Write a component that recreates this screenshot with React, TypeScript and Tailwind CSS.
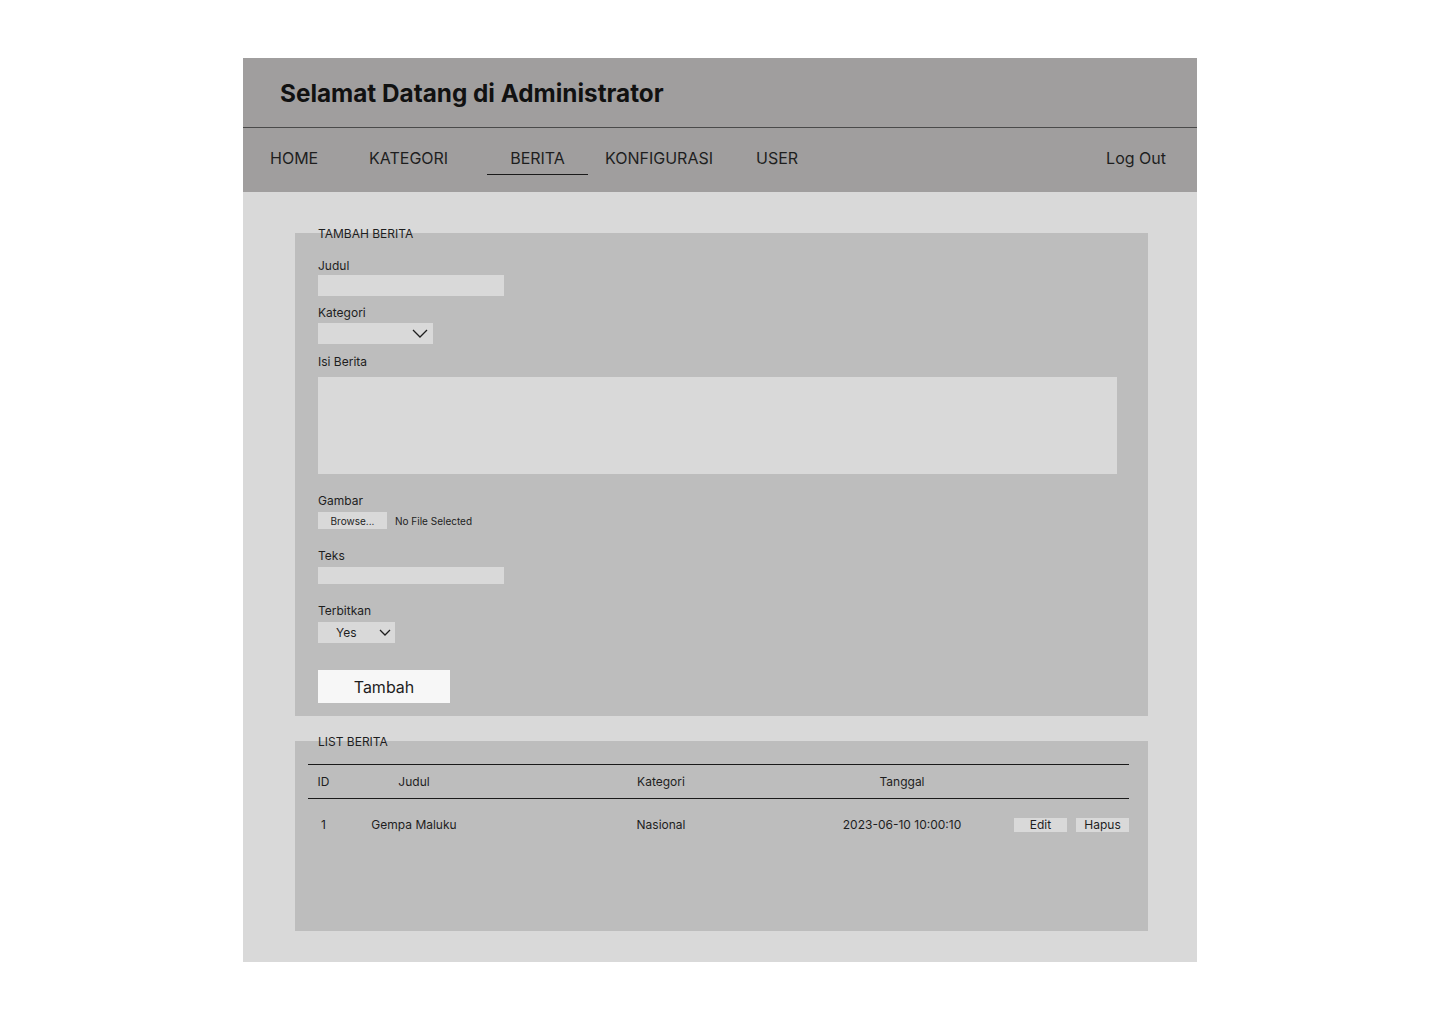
import React from 'react'

function Chevron({ w, h }: { w: number; h: number }) {
  return (
    <svg width={w} height={h} viewBox={`0 0 ${w} ${h}`} fill="none">
      <path d={`M1 1 L${w / 2} ${h - 1} L${w - 1} 1`} stroke="#1e1e1e" strokeWidth="1.3" />
    </svg>
  )
}

export default function App() {
  const nav = 'text-[16px] leading-6 text-[#1e1e1e]'
  const label = 'text-[12px] h-4 leading-[18px] text-[#1e1e1e]'

  return (
    <div className="min-h-screen bg-white font-['Inter',sans-serif] pt-[58px]">
      <div className="mx-auto w-[954px]">
        <header className="h-[70px] bg-[#a09e9e] border-b border-[#4a4a4a] pl-[37px] flex items-center">
          <h1 className="text-[24.3px] font-bold text-[#111] leading-8">Selamat Datang di Administrator</h1>
        </header>

        <nav className="h-[64px] bg-[#a09e9e] flex items-start pt-[18px] pl-[27px] pr-[31px]">
          <a className={`${nav} w-[99px]`}>HOME</a>
          <a className={`${nav} w-[118px]`}>KATEGORI</a>
          <a className={`${nav} w-[101px] text-center pb-[4px] border-b border-[#1a1a1a]`}>BERITA</a>
          <a className={`${nav} w-[151px] ml-[17px]`}>KONFIGURASI</a>
          <a className={nav}>USER</a>
          <a className={`${nav} ml-auto`}>Log Out</a>
        </nav>

        <main className="bg-[#d9d9d9] pt-[33px] pb-[31px] pl-[52px]">
          <fieldset className="w-[853px] bg-[#bdbdbd] px-[23px] pb-[13px]">
            <legend className={label}>TAMBAH BERITA</legend>
            <div className="flex flex-col">
              <span className={`${label} mt-[16px]`}>Judul</span>
              <input className="mt-[2px] w-[186px] h-[21px] bg-[#d9d9d9] outline-none" />

              <span className={`${label} mt-[8px]`}>Kategori</span>
              <div className="mt-[3px] w-[115px] h-[21px] bg-[#d9d9d9] flex items-center justify-end pr-[5px]">
                <Chevron w={16} h={9} />
              </div>

              <span className={`${label} mt-[9px]`}>Isi Berita</span>
              <textarea className="mt-[8px] w-[799px] h-[97px] bg-[#d9d9d9] resize-none outline-none" />

              <span className={`${label} mt-[18px]`}>Gambar</span>
              <div className="mt-[4px] flex items-center gap-[8px]">
                <button className="w-[69px] h-[17px] bg-[#d9d9d9] text-[10px] leading-none text-[#1e1e1e]">Browse...</button>
                <span className="text-[10px] text-[#1e1e1e] translate-y-[1px]">No File Selected</span>
              </div>

              <span className={`${label} mt-[18px]`}>Teks</span>
              <input className="mt-[4px] w-[186px] h-[17px] bg-[#d9d9d9] outline-none" />

              <span className={`${label} mt-[18px]`}>Terbitkan</span>
              <div className="mt-[4px] w-[77px] h-[21px] bg-[#d9d9d9] flex items-center pl-[18px] pr-[4px]">
                <span className="text-[12px] text-[#1e1e1e]">Yes</span>
                <span className="ml-auto flex">
                  <Chevron w={12} h={7} />
                </span>
              </div>

              <button className="mt-[27px] w-[132px] h-[33px] bg-[#f7f7f7] text-[16px] text-[#1e1e1e]">Tambah</button>
            </div>
          </fieldset>

          <fieldset className="mt-[17px] w-[853px] bg-[#bdbdbd] px-[23px]">
            <legend className={label}>LIST BERITA</legend>
            <div className="h-[182px] pt-[15px] -ml-[10px] mr-[-4px]">
              <div className="grid grid-cols-[31px_150px_344px_138px_1fr] h-[35px] items-center border-y border-[#1a1a1a] text-[12px] text-[#1e1e1e] pt-[1px]">
                <span className="text-center">ID</span>
                <span className="text-center">Judul</span>
                <span className="text-center">Kategori</span>
                <span className="text-center">Tanggal</span>
                <span />
              </div>
              <div className="grid grid-cols-[31px_150px_344px_138px_1fr] items-center pt-[17px] text-[12px] text-[#1e1e1e]">
                <span className="text-center">1</span>
                <span className="text-center">Gempa Maluku</span>
                <span className="text-center">Nasional</span>
                <span className="text-center">2023-06-10 10:00:10</span>
                <div className="flex justify-end gap-[9px]">
                  <button className="w-[53px] h-[14px] bg-[#d9d9d9] text-[12px] leading-none">Edit</button>
                  <button className="w-[53px] h-[14px] bg-[#d9d9d9] text-[12px] leading-none">Hapus</button>
                </div>
              </div>
            </div>
          </fieldset>
        </main>
      </div>
    </div>
  )
}
